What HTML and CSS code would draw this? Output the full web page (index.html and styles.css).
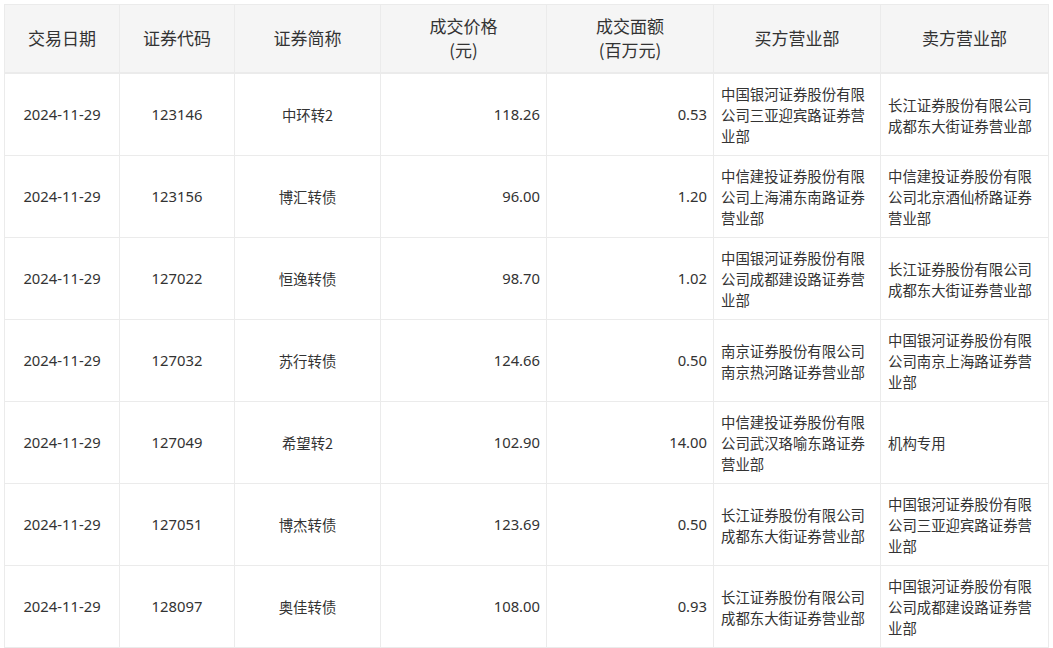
FILE: index.html
```html
<!DOCTYPE html>
<html lang="zh-CN">
<head>
<meta charset="utf-8">
<title>大宗交易</title>
<link rel="stylesheet" href="styles.css">
</head>
<body>
<table class="deals">
  <colgroup>
    <col class="c-date"><col class="c-code"><col class="c-name"><col class="c-price"><col class="c-amt"><col class="c-buy"><col class="c-sell">
  </colgroup>
  <thead>
    <tr>
      <th>交易日期</th>
      <th>证券代码</th>
      <th>证券简称</th>
      <th>成交价格<br>(元)</th>
      <th>成交面额<br>(百万元)</th>
      <th>买方营业部</th>
      <th>卖方营业部</th>
    </tr>
  </thead>
  <tbody>
    <tr><td class="dig">2024-11-29</td><td class="dig">123146</td><td>中环转2</td><td class="num">118.26</td><td class="num">0.53</td><td class="txt">中国银河证券股份有限公司三亚迎宾路证券营业部</td><td class="txt">长江证券股份有限公司成都东大街证券营业部</td></tr>
    <tr><td class="dig">2024-11-29</td><td class="dig">123156</td><td>博汇转债</td><td class="num">96.00</td><td class="num">1.20</td><td class="txt">中信建投证券股份有限公司上海浦东南路证券营业部</td><td class="txt">中信建投证券股份有限公司北京酒仙桥路证券营业部</td></tr>
    <tr><td class="dig">2024-11-29</td><td class="dig">127022</td><td>恒逸转债</td><td class="num">98.70</td><td class="num">1.02</td><td class="txt">中国银河证券股份有限公司成都建设路证券营业部</td><td class="txt">长江证券股份有限公司成都东大街证券营业部</td></tr>
    <tr><td class="dig">2024-11-29</td><td class="dig">127032</td><td>苏行转债</td><td class="num">124.66</td><td class="num">0.50</td><td class="txt">南京证券股份有限公司南京热河路证券营业部</td><td class="txt">中国银河证券股份有限公司南京上海路证券营业部</td></tr>
    <tr><td class="dig">2024-11-29</td><td class="dig">127049</td><td>希望转2</td><td class="num">102.90</td><td class="num">14.00</td><td class="txt">中信建投证券股份有限公司武汉珞喻东路证券营业部</td><td class="txt">机构专用</td></tr>
    <tr><td class="dig">2024-11-29</td><td class="dig">127051</td><td>博杰转债</td><td class="num">123.69</td><td class="num">0.50</td><td class="txt">长江证券股份有限公司成都东大街证券营业部</td><td class="txt">中国银河证券股份有限公司三亚迎宾路证券营业部</td></tr>
    <tr><td class="dig">2024-11-29</td><td class="dig">128097</td><td>奥佳转债</td><td class="num">108.00</td><td class="num">0.93</td><td class="txt">长江证券股份有限公司成都东大街证券营业部</td><td class="txt">中国银河证券股份有限公司成都建设路证券营业部</td></tr>
  </tbody>
</table>
</body>
</html>
```
FILE: styles.css
```css
html, body {
  margin: 0;
  padding: 0;
  background: #fff;
}
body {
  padding: 4px 5px 0 4px;
  font-family: "Noto Sans CJK SC", "Noto Sans", sans-serif;
  color: #333;
}
.deals {
  border-collapse: collapse;
  table-layout: fixed;
  width: 1044px;
}
.c-date { width: 115px; }
.c-code { width: 115px; }
.c-name { width: 146px; }
.c-price { width: 166px; }
.c-amt { width: 167px; }
.c-buy { width: 167px; }
.c-sell { width: 168px; }

.deals th,
.deals td {
  border: 1px solid #ebebeb;
  text-align: center;
  vertical-align: middle;
}
.deals th {
  background: #f5f5f5;
  font-weight: normal;
  font-size: 17px;
  line-height: 24px;
  padding: 9px 7px 10px;
  border-bottom: 2px solid #ebebeb;
}
.deals td {
  font-size: 14.4px;
  line-height: 21px;
  height: 63px;
  padding: 9px 7px;
}
.deals td.dig,
.deals td.num {
  font-family: "Noto Sans", "Noto Sans CJK SC", sans-serif;
  font-size: 14.8px;
}
.deals td.num {
  text-align: right;
  padding-right: 6px;
}
.deals td.txt {
  text-align: left;
  word-break: break-all;
}
```
